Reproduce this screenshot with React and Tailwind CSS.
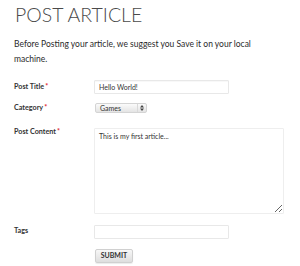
import React from "react";

const Label = ({ children, required, className = "" }) => (
  <div className={`w-[80px] shrink-0 text-[7.2px] font-bold text-[#333] ${className}`}>
    {children}
    {required && <span className="ml-[1px] text-[#e0262b]">*</span>}
  </div>
);

export default function App() {
  return (
    <div className="w-[300px] h-[266px] bg-white px-[14px] font-['Lato','Open_Sans',sans-serif] overflow-hidden">
      <h1 className="pt-[3px] pl-[1px] text-[19.5px] leading-[24px] font-light text-[#4a4a4a]">POST ARTICLE</h1>

      <p className="mt-[10px] text-[8.5px] leading-[15px] text-[#2a2a2a]">
        Before Posting your article, we suggest you Save it on your local machine.
      </p>

      <form className="flex flex-col" onSubmit={(e) => e.preventDefault()}>
        <div className="mt-[13px] flex items-center">
          <Label required>Post Title</Label>
          <input
            defaultValue="Hello World!"
            className="w-[135px] h-[14px] border border-[#e8e8e8] rounded-[1px] px-[4px] text-[7px] text-[#333] outline-none shadow-[inset_0_1px_1px_rgba(0,0,0,0.03)]"
          />
        </div>

        <div className="mt-[9px] flex items-center">
          <Label required>Category</Label>
          <div className="ml-[1px] w-[52px] h-[10px] flex items-stretch border border-[#d4d4d4] rounded-[2px] bg-gradient-to-b from-[#fbfbfb] to-[#e4e4e4] text-[7px] text-[#333]">
            <span className="flex-1 pl-[4px] leading-[8px]">Games</span>
            <span className="w-[9px] border-l border-[#d9d9d9] flex items-center justify-center">
              <svg width="4" height="6" viewBox="0 0 4 6">
                <path d="M0 2.5L2 0L4 2.5Z M0 3.5L2 6L4 3.5Z" fill="#444" />
              </svg>
            </span>
          </div>
        </div>

        <div className="mt-[14px] flex items-start">
          <Label required className="mt-[-1px]">Post Content</Label>
          <textarea
            defaultValue="This is my first article..."
            className="w-[190px] h-[86px] border border-[#eeeeee] rounded-[1px] px-[4px] py-[2px] text-[7px] leading-[10px] text-[#333] outline-none"
          />
        </div>

        <div className="mt-[11px] flex items-center">
          <Label>Tags</Label>
          <input className="w-[135px] h-[14px] border border-[#e8e8e8] rounded-[1px] px-[4px] text-[7px] outline-none" />
        </div>

        <div className="mt-[10px] flex">
          <div className="w-[81px] shrink-0" />
          <button
            type="submit"
            className="w-[38px] h-[14px] border border-[#d0d0d0] rounded-[2px] bg-gradient-to-b from-[#f7f7f7] to-[#dedede] text-[7px] font-bold text-[#333] leading-none shadow-[0_1px_1px_rgba(0,0,0,0.08)]"
          >
            SUBMIT
          </button>
        </div>
      </form>
    </div>
  );
}
